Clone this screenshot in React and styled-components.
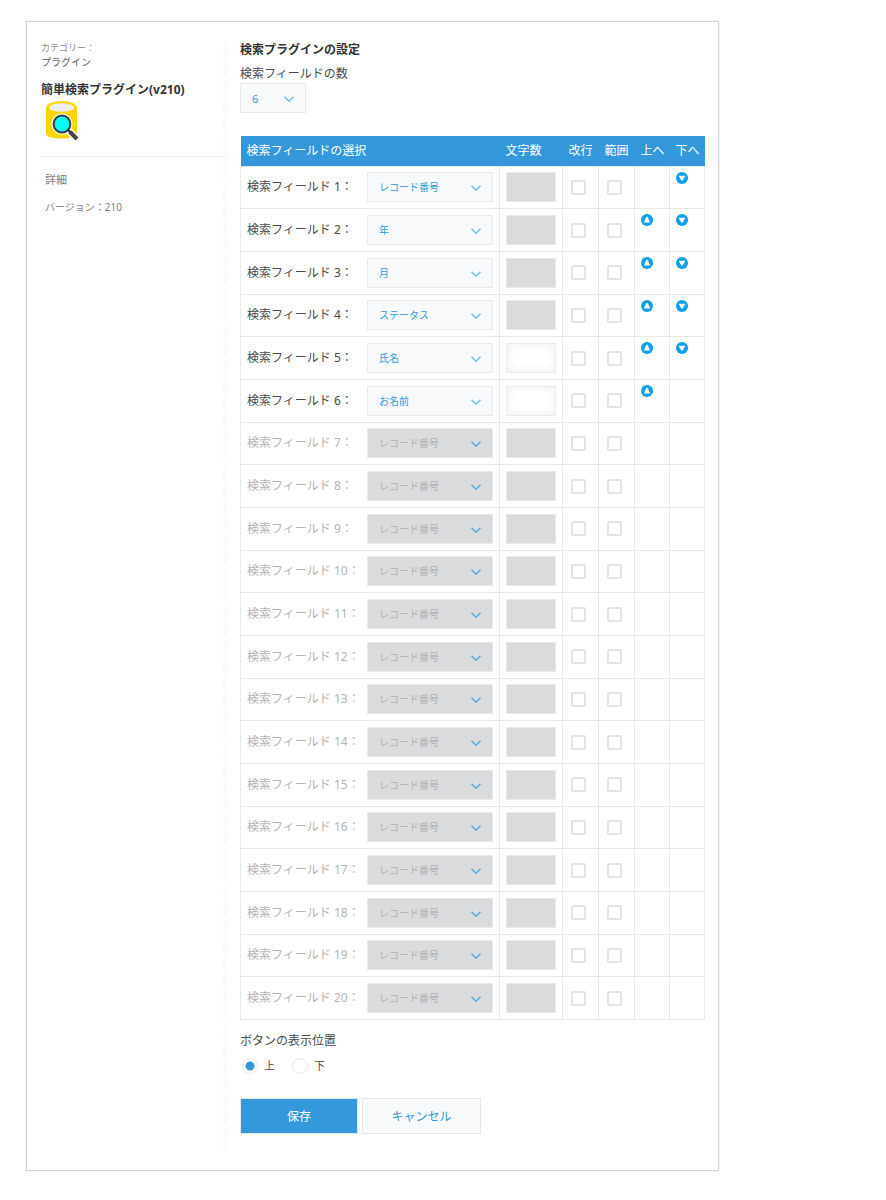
import React, { useState } from 'react';
import styled, { createGlobalStyle } from 'styled-components';

const GlobalStyle = createGlobalStyle`
*{
    box-sizing: border-box;
}
body{
    margin: 0;
    background: #fff;
    color: #4a4a4a;
    font-family: "Noto Sans", "Noto Sans CJK JP", sans-serif;
    font-size: 12px;
    line-height: 18px;
}
button, input, select{
    font-family: inherit;
    margin: 0;
}
`

const Panel = styled.div`
display: flex;
margin: 21px 167px 29px 26px;
padding: 19px 13px 18px 14px;
border: 1px solid #d3d3d3;
box-shadow: 0 0 1px 0 #d3d3d3;
`

const Sidebar = styled.aside`
flex: 0 0 182px;
color: #808080;
`

const Category = styled.p`
margin: 0;
font-size: 10px;
line-height: 14px;
color: #666;
`

const CategoryLabel = styled.span`
display: block;
font-size: 9px;
color: #888;
`

const PluginName = styled.h1`
margin: 12px 0 0;
font-size: 12px;
line-height: 18px;
font-weight: 700;
color: #333;
white-space: nowrap;
`

const Logo = styled.svg`
display: block;
width: 42px;
height: 42px;
margin-top: 2px;
`

const Detail = styled.section`
margin-top: 13px;
padding: 14px 4px;
border-top: 1px solid #eee;
`

const DetailTitle = styled.h2`
margin: 0 0 10px;
font-size: 11px;
line-height: 18px;
font-weight: 400;
`

const DetailText = styled.p`
margin: 0;
font-size: 10px;
line-height: 16px;
`

const Divider = styled.div`
flex: 0 0 4px;
margin-right: 13px;
background: repeating-linear-gradient(135deg, #f4f4f4 0, #f4f4f4 1px, #fff 1px, #fff 3px);
`

const Main = styled.main`
flex: 1;
min-width: 0;
padding-bottom: 18px;
`

const Heading = styled.h2`
margin: 0 0 6px;
font-size: 12px;
line-height: 18px;
font-weight: 700;
color: #333;
`

const FieldLabel = styled.label`
display: block;
line-height: 18px;
`

const SelectBox = styled.div`
display: grid;
align-items: center;
flex: 1;
width: ${props => props.$width || 'auto'};

&>*{
    grid-area: 1 / 1;
}
`

const Select = styled.select`
appearance: none;
width: 100%;
height: 30px;
padding: 0 24px 0 11px;
border: 1px solid #e8ebec;
border-radius: 0;
background: #f7f9fa;
color: #3498db;
font-size: ${props => props.$size || '10px'};

&:disabled{
    background: #d9dbdc;
    color: #b2b2b2;
    opacity: 1;
}
`

const Chevron = styled.svg`
justify-self: end;
width: 10px;
height: 6px;
margin: 2px 12px 0 0;
fill: none;
stroke: ${props => props.$strong ? '#5aa9dc' : '#72bbe8'};
stroke-width: 1.4;
pointer-events: none;
`

const Table = styled.table`
width: 100%;
height: 884px;
margin-top: 23px;
border-collapse: collapse;
table-layout: fixed;
`

const Th = styled.th`
height: 30px;
padding: 0 0 0 6px;
background: #3498db;
color: #fff;
font-weight: 400;
text-align: left;
white-space: nowrap;
`

const Td = styled.td`
padding: ${props => props.$pad || '5px 6px'};
border: 1px solid #e8eaea;
vertical-align: ${props => props.$top ? 'top' : 'middle'};
`

const Field = styled.div`
display: flex;
align-items: center;
`

const RowLabel = styled.label`
flex: 0 0 120px;
white-space: nowrap;
color: ${props => props.$off ? '#b5b5b5' : '#4a4a4a'};
`

const CountInput = styled.input`
display: block;
width: 100%;
height: 30px;
padding: 0 6px;
border: 1px solid #e9ebeb;
box-shadow: inset 0 0 8px 2px #f3f3f3;
font-size: 10px;

&:disabled{
    background: #d9dbdd;
    box-shadow: none;
}
`

const Check = styled.input`
appearance: none;
display: block;
width: 15px;
height: 15px;
border: 2px solid #e4e4e4;
border-radius: 2px;
background: #fff;

&:checked{
    background: #3498db;
}
`

const MoveButton = styled.button`
display: block;
width: 12px;
height: 12px;
padding: 0;
border: 0;
background: none;
cursor: pointer;

&>svg{
    display: block;
}
`

const Position = styled.fieldset`
display: flex;
flex-wrap: wrap;
margin: 12px 0 0;
padding: 0;
border: 0;
`

const Legend = styled.legend`
padding: 0;
margin-bottom: 8px;
`

const RadioLabel = styled.label`
display: flex;
align-items: center;
gap: 6px;
width: 50px;
padding-left: 2px;
font-size: 11px;
line-height: 16px;
`

const Radio = styled.input`
appearance: none;
width: 16px;
height: 16px;
border: 1px solid #e6e6e6;
border-radius: 50%;
background: #fff;

&:checked{
    background: radial-gradient(circle, #3498db 0, #3498db 4px, #fff 5px);
}
`

const Actions = styled.div`
display: flex;
gap: 4px;
margin-top: 24px;
`

const Button = styled.button`
width: ${props => props.$primary ? '118px' : '119px'};
height: 36px;
padding: 0;
border: 1px solid #e3e7e8;
background: ${props => props.$primary ? '#3498db' : '#f7f9fa'};
color: ${props => props.$primary ? '#fff' : '#3498db'};
font-size: 12px;
cursor: pointer;
`

const ROWS = 20;
const CHOICES = ['レコード番号', '年', '月', 'ステータス', '氏名', 'お名前'];
const TEXT_FIELDS = ['氏名', 'お名前'];

const PluginLogo = () => (
    <Logo viewBox="0 0 42 42" aria-hidden="true">
        <path d="M5 7v26c0 6 31 6 31 0V7z" fill="#ffd500" />
        <ellipse cx="20.5" cy="7" rx="15.5" ry="7" fill="#ffd500" />
        <ellipse cx="20.5" cy="6.5" rx="12.5" ry="4.3" fill="#eee" />
        <circle cx="21" cy="23" r="10.5" fill="#fff" />
        <path d="M26 28l10 10" stroke="#fff" strokeWidth="7" />
        <path d="M27 29l3 3" stroke="#3c3c3c" strokeWidth="2.5" />
        <path d="M29 31l7 7" stroke="#444" strokeWidth="4.2" />
        <circle cx="21" cy="23" r="8.4" fill="#0ff" stroke="#3c3c3c" strokeWidth="2" />
    </Logo>
)

const MoveIcon = ({ down }) => (
    <svg width="12" height="12" viewBox="0 0 12 12" aria-hidden="true">
        <circle cx="6" cy="6" r="6" fill="#0a9fe8" />
        <path d={down ? 'M2.7 3.7h6.6L6.8 8.5H5.2z' : 'M5.4 2.7h1.2l2.6 5.8H2.8z'} fill="#fff" />
    </svg>
)

const Dropdown = ({ id, value, options, disabled, onChange, width, size }) => (
    <SelectBox $width={width}>
        <Select id={id} value={value} disabled={disabled} onChange={onChange} $size={size}>
            {options.map(o => <option key={o} value={o}>{o}</option>)}
        </Select>
        <Chevron viewBox="0 0 10 6" $strong={disabled}><path d="M0.5 0.7L5 5.2L9.5 0.7" /></Chevron>
    </SelectBox>
)

const FieldRow = ({ index, value, count, onSelect, onMove }) => {
    const n = index + 1;
    const off = index >= count;
    return (
        <tr>
            <Td>
                <Field>
                    <RowLabel htmlFor={`field${n}`} $off={off}>検索フィールド {n}：</RowLabel>
                    <Dropdown
                        id={`field${n}`}
                        value={value}
                        options={CHOICES}
                        disabled={off}
                        onChange={e => onSelect(index, e.target.value)}
                    />
                </Field>
            </Td>
            <Td><CountInput aria-label={`文字数 ${n}`} disabled={off || !TEXT_FIELDS.includes(value)} /></Td>
            <Td $pad="0 8px"><Check type="checkbox" aria-label={`改行 ${n}`} disabled={off} /></Td>
            <Td $pad="0 8px"><Check type="checkbox" aria-label={`範囲 ${n}`} disabled={off} /></Td>
            <Td $top $pad="5px 0 0 6px">
                {!off && index > 0 &&
                    <MoveButton type="button" aria-label="上へ" onClick={() => onMove(index, -1)}><MoveIcon /></MoveButton>}
            </Td>
            <Td $top $pad="5px 0 0 6px">
                {index < count - 1 &&
                    <MoveButton type="button" aria-label="下へ" onClick={() => onMove(index, 1)}><MoveIcon down /></MoveButton>}
            </Td>
        </tr>
    )
}

const App = () => {
    const [count, setCount] = useState(6);
    const [place, setPlace] = useState('上');
    const [fields, setFields] = useState(
        Array.from({ length: ROWS }, (_, i) => CHOICES[i] || CHOICES[0])
    );

    const select = (i, value) => setFields(fields.map((f, k) => k === i ? value : f));

    const move = (i, step) => {
        const next = [...fields];
        [next[i], next[i + step]] = [next[i + step], next[i]];
        setFields(next);
    }

    return (
        <>
            <GlobalStyle />
            <Panel>
                <Sidebar>
                    <Category><CategoryLabel>カテゴリー：</CategoryLabel>プラグイン</Category>
                    <PluginName>簡単検索プラグイン(v210)</PluginName>
                    <PluginLogo />
                    <Detail>
                        <DetailTitle>詳細</DetailTitle>
                        <DetailText>バージョン：210</DetailText>
                    </Detail>
                </Sidebar>
                <Divider />
                <Main>
                    <Heading>検索プラグインの設定</Heading>
                    <FieldLabel htmlFor="count">検索フィールドの数</FieldLabel>
                    <Dropdown
                        id="count"
                        width="66px"
                        size="11px"
                        value={count}
                        options={Array.from({ length: ROWS }, (_, i) => i + 1)}
                        onChange={e => setCount(Number(e.target.value))}
                    />
                    <Table>
                        <colgroup>
                            <col />
                            <col width="63" />
                            <col width="36" />
                            <col width="36" />
                            <col width="35" />
                            <col width="35" />
                        </colgroup>
                        <thead>
                            <tr>
                                <Th>検索フィールドの選択</Th>
                                <Th>文字数</Th>
                                <Th>改行</Th>
                                <Th>範囲</Th>
                                <Th>上へ</Th>
                                <Th>下へ</Th>
                            </tr>
                        </thead>
                        <tbody>
                            {fields.map((value, i) => (
                                <FieldRow key={i} index={i} value={value} count={count} onSelect={select} onMove={move} />
                            ))}
                        </tbody>
                    </Table>
                    <Position>
                        <Legend>ボタンの表示位置</Legend>
                        {['上', '下'].map(p => (
                            <RadioLabel key={p}>
                                <Radio type="radio" name="place" checked={place === p} onChange={() => setPlace(p)} />
                                {p}
                            </RadioLabel>
                        ))}
                    </Position>
                    <Actions>
                        <Button type="button" $primary>保存</Button>
                        <Button type="button">キャンセル</Button>
                    </Actions>
                </Main>
            </Panel>
        </>
    )
}

export default App;
